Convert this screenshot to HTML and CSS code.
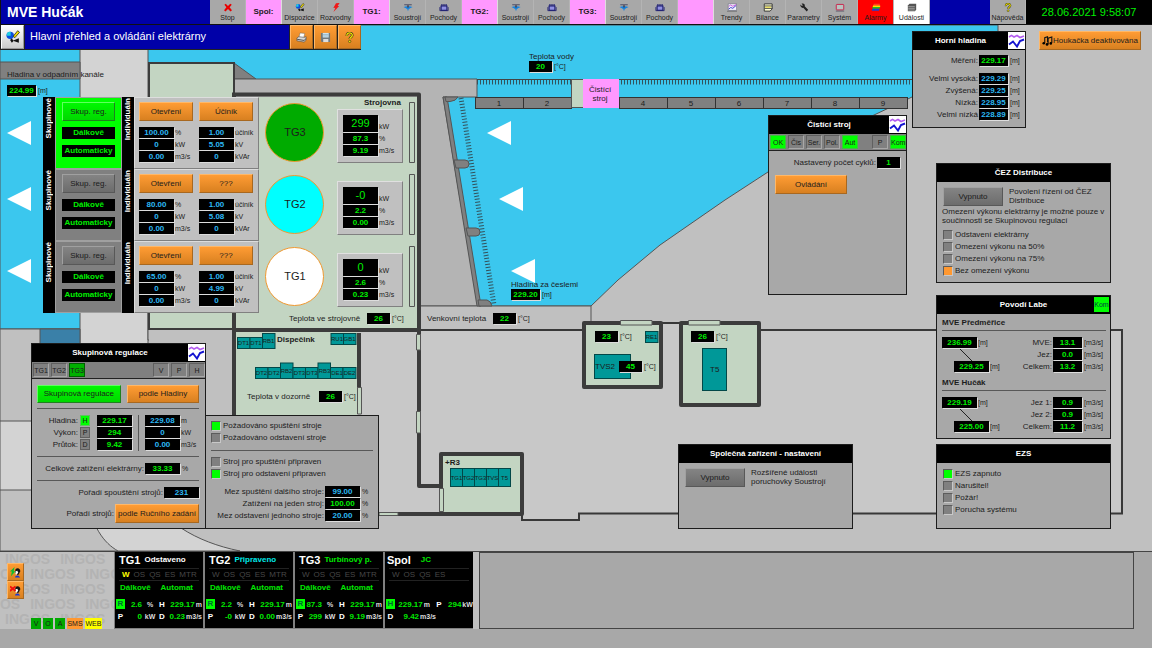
FILE: index.html
```html
<!DOCTYPE html>
<html lang="cs">
<head>
<meta charset="utf-8">
<title>MVE Hučák – Hlavní přehled</title>
<meta name="viewport" content="width=device-width, initial-scale=1">
<link rel="stylesheet" href="styles.css">
</head>
<body>
<svg class="defs" aria-hidden="true">
  <defs>
    <symbol id="i-stop" viewBox="0 0 10 10"><path d="M1 2 2.500 .8 5 3.200 7.500 .8 9.200 2 6.800 4.800 9.400 8 7.800 9.400 5 6.800 2.200 9.400 .6 8 3.200 4.800Z" fill="#e80000"/></symbol>
    <symbol id="i-disp" viewBox="0 0 12 12"><circle cx="3.600" cy="4.600" r="3.200" fill="#0a50e0"/><path d="M.6 4A3 3 0 0 1 4 1.500V5H1Z" fill="#20d0e0"/><path d="M10 .6 11.600 2 7.600 6.600 6.200 5.400Z" fill="#f4e000" stroke="#111" stroke-width=".6"/><path d="M3.500 8.500 5 7l1.200 2L11 7v4L6.500 9.500 5 11Z" fill="#111"/></symbol>
    <symbol id="i-bolt" viewBox="0 0 10 10"><path d="M5 .3 9 0 6.800 3.200 8.500 3.200 2.200 10 4.300 5.400 2 5.600Z" fill="#f01818"/></symbol>
    <symbol id="i-turb" viewBox="0 0 12 10"><path d="M1.500 .8h9v1.600h-9z" fill="#667"/><path d="M.5 4.400 4.200 3.400l1.800.8 1.800-.8 3.700 1L8.500 6 6.800 7 6 9.600 5.200 7 3.500 6Z" fill="#1684e0"/><path d="M5 2.400h2v2.600H5z" fill="#445"/></symbol>
    <symbol id="i-proc" viewBox="0 0 12 10"><path d="M2.500 3.200h7v5h-7z" fill="#9090e0" stroke="#181870" stroke-width="1.300"/><path d="M3.500 .8v2.400M6 .8v2.400M8.500 .8v2.400" stroke="#181870" stroke-width="1.300"/><path d="M1 4.500v4.300h10V4.500" fill="none" stroke="#181870" stroke-width=".9"/></symbol>
    <symbol id="i-trend" viewBox="0 0 12 10"><path d="M1.500 .5h10v8h-10z" fill="#f4f4ff" stroke="#667" stroke-width=".7"/><path d="m2 7 2.500-2L7 6l4-3.500" fill="none" stroke="#2020c0"/><path d="m2 4 2-2 3 1.500L11 1.500" fill="none" stroke="#c040d0"/><path d="M0 9.500h12" stroke="#555" stroke-width=".7"/></symbol>
    <symbol id="i-bal" viewBox="0 0 12 10"><path d="M1.500 .7h9.500v6L8.500 9.300h-7z" fill="#ffffd8" stroke="#222"/><path d="M2 3.200h9M2 6h9" stroke="#222"/><path d="M2.500 4.600h7" stroke="#f0e020"/></symbol>
    <symbol id="i-wrench" viewBox="0 0 10 10"><path d="M1 1.800 2.700 3.400 3.800 2.400 2.300.7C5 0 6.400 1.600 5.800 3.600L9.600 7.600 8 9.400 4.200 5.400C2.200 5.800.6 4 1 1.800Z" fill="#222"/></symbol>
    <symbol id="i-sys" viewBox="0 0 12 10"><rect x="1.500" y="1.300" width="9" height="6.600" rx=".8" fill="#b8c4c0" stroke="#c82850" stroke-width="1.200"/><path d="M1 9.300h10" stroke="#556"/></symbol>
    <symbol id="i-alarm" viewBox="0 0 12 10"><path d="M3.500 .5h7v2h-8z" fill="#ff4020"/><path d="M2.500 2.500h8.500v2H2z" fill="#ffe000"/><path d="M2 4.500h9l-.8 2H1.500z" fill="#20c020"/><path d="M1.500 6.500h8.700L9.500 9H1z" fill="#2040d0"/></symbol>
    <symbol id="i-event" viewBox="0 0 12 10"><path d="M3 .5h8v7.200L9.500 9.500H1V2.500Z" fill="#555"/><path d="M1.500 4h7.800M1.500 6h7.800M1.500 8h7.800" stroke="#ccc" stroke-width=".7"/></symbol>
    <symbol id="i-help" viewBox="0 0 10 12"><path d="M2.200 4.200C1.800 1.800 3.500 1 5 1s3.300.9 3 2.900C7.700 5.600 5.400 5.600 5.300 7.600" fill="none" stroke="#222" stroke-width="2.600"/><path d="M2.200 4.200C1.800 1.800 3.500 1 5 1s3.300.9 3 2.900C7.700 5.600 5.400 5.600 5.300 7.600" fill="none" stroke="#f2e400" stroke-width="1.500"/><circle cx="5.200" cy="10.300" r="1.300" fill="#f2e400" stroke="#222" stroke-width=".6"/></symbol>
    <symbol id="i-print" viewBox="0 0 12 12"><path d="m4.500 1 5 .6-1 4.600-5.300-.4z" fill="#fff" stroke="#666" stroke-width=".5"/><path d="M1 6.500 3 5.200l6.500.6L11 5v3.800L9 11 1 9.600Z" fill="#d8d8d8" stroke="#444" stroke-width=".6"/><path d="m1.300 8 7.500 1.200L11 7.200" fill="none" stroke="#444"/></symbol>
    <symbol id="i-save" viewBox="0 0 12 12"><path d="M1 1h10v10H2.200L1 10Z" fill="#70787c"/><path d="M3 1h6.500v5H3z" fill="#cfe4ee"/><path d="M3.500 7.600h5.600V11H3.500z" fill="#ddd"/><path d="M3.300 2.700h6M3.300 4.300h6" stroke="#78a0b8" stroke-width=".6"/></symbol>
    <symbol id="i-chart" viewBox="0 0 17 17"><path d="M0 0h17v17H0z" fill="#fff"/><path d="m1 5 2.500-1.600L6 5l3-1.500 3 2L16 4" fill="none" stroke="#b45cf0" stroke-width="1.600"/><path d="m1 12.500 4-3 4 5 3-5.500 4-1.500" fill="none" stroke="#1414d0" stroke-width="1.900"/></symbol>
    <symbol id="i-notes" viewBox="0 0 12 12"><path d="M3 8.200V2.300l3-1v6M6.700 9.500V3l4-1.400v6.600" fill="none" stroke="#111" stroke-width="1.200"/><circle cx="1.900" cy="8.400" r="1.400"/><circle cx="5.500" cy="9.800" r="1.500"/><circle cx="9.600" cy="8.600" r="1.400"/></symbol>
    <symbol id="i-head" viewBox="0 0 12 12"><path d="M6 2.500C8 0 11.600 1.400 11.200 5L10 6.800V8L8 8.600 5.500 6Z" fill="#151515"/><path d="M6 4.500 8 4l.8 2L7.600 8.200 6 7.800Z" fill="#fff"/><path d="M5.500 11.500C5.500 8.800 9.500 8 11 11.500Z" fill="#1838d8"/></symbol>
  </defs>
</svg>

<header class="topbar">
  <h1 class="brand">MVE Hučák</h1>
  <nav class="menu" aria-label="Hlavní menu">
    <button class="mi"><svg><use href="#i-stop"/></svg>Stop</button>
    <span class="mg">Spol:</span>
    <button class="mi"><svg><use href="#i-disp"/></svg>Dispozice</button>
    <button class="mi"><svg><use href="#i-bolt"/></svg>Rozvodny</button>
    <span class="mg">TG1:</span>
    <button class="mi"><svg><use href="#i-turb"/></svg>Soustrojí</button>
    <button class="mi"><svg><use href="#i-proc"/></svg>Pochody</button>
    <span class="mg">TG2:</span>
    <button class="mi"><svg><use href="#i-turb"/></svg>Soustrojí</button>
    <button class="mi"><svg><use href="#i-proc"/></svg>Pochody</button>
    <span class="mg">TG3:</span>
    <button class="mi"><svg><use href="#i-turb"/></svg>Soustrojí</button>
    <button class="mi"><svg><use href="#i-proc"/></svg>Pochody</button>
    <span class="mg"></span>
    <button class="mi"><svg><use href="#i-trend"/></svg>Trendy</button>
    <button class="mi"><svg><use href="#i-bal"/></svg>Bilance</button>
    <button class="mi"><svg><use href="#i-wrench"/></svg>Parametry</button>
    <button class="mi"><svg><use href="#i-sys"/></svg>Systém</button>
    <button class="mi mi-alarm"><svg><use href="#i-alarm"/></svg>Alarmy</button>
    <button class="mi mi-event"><svg><use href="#i-event"/></svg>Události</button>
  </nav>
  <div class="topfill"></div>
  <button class="mi"><svg><use href="#i-help"/></svg>Nápověda</button>
  <time class="clock" datetime="2021-06-28T09:58:07">28.06.2021 9:58:07</time>
</header>

<main class="scene">
  <svg class="plan" viewBox="0 25 1152 526" role="img" aria-label="Dispozice elektrárny">
    <g class="edge">
      <path class="water" d="M0 25H998V97H912L874 115 820 142 768 172 725 200 660 245 618 280 591 306H497L80 329H0Z"/>
      <path class="land" d="M0 329H150V551H0Z"/>
      <path class="road" d="M0 421H80V49H148V490C160 520 195 542 240 551H118C104 543 92 528 84 490H0Z"/>
      <path class="deep" d="M40 329H80V360H40Z"/>
      <path class="stone" d="M0 62H80V79H0Z"/>
      <path class="stone" d="M234 63 256 79H234Z"/>
      <path class="deck" d="M234 79H477V97H443L478 306H234Z"/>
      <path class="land" d="M148 306H591V340H148Z"/>
    </g>
    <path class="yard" d="M236 330H1121V513H579V520H522V514H236Z"/>
    <path class="yard" d="M660 323H682V331H660Z"/>
    <path class="land" d="M149 330H233V420H149Z"/>
    <path class="yardline" d="M420 330H582M660 323H680M760 330H1122V513.500H579V520H522V514"/>

    <path class="stone edge" d="M443 97H447L481 306H477Z"/>
    <path class="stone edge" d="M445 97H458Q456 101 450 101.500H446ZM454 160H465A4 4 0 0 1 465 168H456ZM466 228H476A4 4 0 0 1 476 236H468ZM478 300H487Q491 301 492 306H479Z"/>
    <path class="comb-side" d="M461 98 494 305"/>
    <path class="comb-top" d="M477 82H912"/>
    <path class="hair" d="M477 79.500H912M477 97.500H907"/>
    <path class="arrow" d="M7 133 31 121V145ZM7 199 31 187V211ZM7 271 31 259V283ZM487 133 511 121V145ZM499 199 523 187V211ZM511 271 535 259V283Z"/>

    <g class="bay">
      <rect x="475.500" y="97.500" width="48" height="11"/><rect x="523.500" y="97.500" width="48" height="11"/>
      <rect x="619.500" y="97.500" width="48" height="11"/><rect x="667.500" y="97.500" width="48" height="11"/>
      <rect x="715.500" y="97.500" width="48" height="11"/><rect x="763.500" y="97.500" width="48" height="11"/>
      <rect x="811.500" y="97.500" width="48" height="11"/><rect x="859.500" y="97.500" width="48" height="11"/>
    </g>
    <g class="t mid">
      <text x="499" y="106">1</text><text x="547" y="106">2</text><text x="643" y="106">4</text><text x="691" y="106">5</text>
      <text x="739" y="106">6</text><text x="787" y="106">7</text><text x="835" y="106">8</text><text x="883" y="106">9</text>
    </g>
    <rect class="floor edge" x="571.500" y="79.500" width="12" height="28"/>
    <rect class="cleaner" x="583" y="79" width="36" height="29"/>
    <text class="t mid" x="600" y="92">Čistící</text><text class="t mid" x="600" y="101">stroj</text>

    <rect class="floor wall-thin" x="149" y="63" width="85" height="266"/>
    <path class="wall" d="M232 94.500H419V486H439"/>
    <path class="floor" d="M236 97H417V328H236Z"/>
    <path class="wall" d="M234 96V415M236 330H417"/>
    <path class="floor" d="M236 332H357V415H236Z"/>
    <path class="wall" d="M359 333V388"/>
    <path class="wall" d="M398 514H441"/>
    <path class="floor edge" d="M357.500 387.500H361.500V414H357.500ZM416.500 334.500H420.500V350H416.500ZM416.500 411.500H420.500V433H416.500ZM379 512.500H398V515.500H379Z"/>
    <path class="floor edge" d="M409.500 102.500H414.500V162.500H409.500ZM409.500 174.500H414.500V234.500H409.500ZM409.500 246.500H414.500V306.500H409.500Z"/>

    <rect class="room" x="441" y="454" width="81" height="60"/>
    <path class="floor edge" d="M439.500 488.500H443.500V511.500H439.500Z"/>
    <rect class="room" x="584" y="323" width="77" height="64"/>
    <rect class="room" x="681" y="323" width="78" height="82"/>
    <path class="floor edge" d="M620.500 320.500H652V325H620.500ZM688.500 320.500H720V325H688.500Z"/>

    <g class="cab">
      <rect x="237.500" y="337.500" width="12.500" height="11"/><rect x="250" y="337.500" width="12.500" height="11"/><rect x="262.500" y="333.500" width="12.500" height="15"/>
      <rect x="331" y="333.500" width="12.500" height="11"/><rect x="343.500" y="333.500" width="12.500" height="11"/>
      <rect x="255.500" y="367.500" width="12.500" height="11"/><rect x="268" y="367.500" width="12.500" height="11"/><rect x="280.500" y="363" width="12.500" height="15.500"/>
      <rect x="293" y="367.500" width="12.500" height="11"/><rect x="305.500" y="367.500" width="12.500" height="11"/><rect x="318" y="363" width="12.500" height="15.500"/>
      <rect x="330.500" y="367.500" width="12.500" height="11"/><rect x="343" y="367.500" width="13" height="11"/>
      <rect x="450.500" y="468.500" width="12" height="18"/><rect x="462.500" y="468.500" width="12" height="18"/><rect x="474.500" y="468.500" width="12" height="18"/><rect x="486.500" y="468.500" width="12" height="18"/><rect x="498.500" y="468.500" width="12" height="18"/>
      <rect x="645.500" y="331.500" width="12.500" height="11"/><rect x="594.500" y="354.500" width="36" height="24"/><rect x="702.500" y="348.500" width="24" height="42"/>
    </g>
    <g class="t tiny mid">
      <text x="243.500" y="345">DT1</text><text x="256" y="345">DT1</text><text x="268.500" y="343">RB1</text>
      <text x="337" y="341">RU1</text><text x="349.500" y="341">GB1</text>
      <text x="261.500" y="375">DT2</text><text x="274" y="375">DT2</text><text x="286.500" y="373">RB2</text><text x="299.500" y="375">DT3</text>
      <text x="312" y="375">DT3</text><text x="324.500" y="373">RB3</text><text x="337" y="375">DE1</text><text x="349.500" y="375">DE2</text>
      <text x="456.500" y="480">TG1</text><text x="468.500" y="480">TG2</text><text x="480.500" y="480">TG3</text><text x="492.500" y="480">TVS</text><text x="504.500" y="480">T5</text>
      <text x="651.500" y="339">RE1</text>
    </g>
    <g class="t">
      <text x="595" y="369">TVS2</text><text x="710" y="372">T5</text>
      <text x="7" y="77">Hladina v odpadním kanále</text>
      <text x="529" y="59">Teplota vody</text>
      <text x="511" y="287">Hladina za česlemi</text>
      <text x="289" y="321">Teplota ve strojovně</text>
      <text x="427" y="321">Venkovní teplota</text>
      <text x="247" y="399">Teplota v dozorně</text>
      <text class="b" x="364" y="105">Strojovna</text>
      <text class="b" x="277" y="342">Dispečink</text>
      <text class="b" x="445" y="465">+R3</text>
    </g>
    <g class="unitg">
      <circle cx="294.500" cy="132.500" r="29" fill="#00ab00"/><circle cx="294.500" cy="204.500" r="29" fill="#0ff"/><circle cx="294.500" cy="276.500" r="29" fill="#fff"/>
    </g>
    <g class="t big mid"><text x="295" y="136">TG3</text><text x="295" y="208">TG2</text><text x="295" y="280">TG1</text></g>
  </svg>

  <div class="titlebar">
    <button class="tool white" aria-label="Dispozice"><svg><use href="#i-disp"/></svg></button>
    <h2>Hlavní přehled a ovládání elektrárny</h2>
    <button class="tool" aria-label="Tisk"><svg><use href="#i-print"/></svg></button>
    <button class="tool" aria-label="Uložit"><svg><use href="#i-save"/></svg></button>
    <button class="tool" aria-label="Nápověda"><svg><use href="#i-help"/></svg></button>
  </div>

  <div class="pin p-tail"><output class="v">224.99</output><span class="u">[m]</span></div>
  <div class="pin p-water"><output class="v w23">20</output><span class="u">[°C]</span></div>
  <div class="pin p-rack"><output class="v">229.20</output><span class="u">[m]</span></div>
  <div class="pin p-hall"><output class="v w23">26</output><span class="u">[°C]</span></div>
  <div class="pin p-out"><output class="v w23">22</output><span class="u">[°C]</span></div>
  <div class="pin p-ctrl"><output class="v w23">26</output><span class="u">[°C]</span></div>
  <div class="pin p-tvs"><output class="v w23">23</output><span class="u">[°C]</span></div>
  <div class="pin p-tvs2"><output class="v w23">45</output><span class="u">[°C]</span></div>
  <div class="pin p-t5"><output class="v w23">26</output><span class="u">[°C]</span></div>

  <section class="units" aria-label="Řízení soustrojí">
    <div class="unit on">
      <div class="side"><b>Skupinové</b></div>
      <div class="grp"><button class="btn">Skup. reg.</button><output class="v">Dálkově</output><output class="v">Automaticky</output></div>
      <div class="side"><b>Individuáln</b></div>
      <div class="ind">
        <div><button class="btn or">Otevření</button><p><output class="v s">100.00</output>%</p><p><output class="v s">0</output>kW</p><p><output class="v s">0.00</output>m3/s</p></div>
        <div><button class="btn or">Účiník</button><p><output class="v s">1.00</output>účiník</p><p><output class="v s">5.05</output>kV</p><p><output class="v s">0</output>kVAr</p></div>
      </div>
    </div>
    <div class="unit">
      <div class="side"><b>Skupinové</b></div>
      <div class="grp"><button class="btn">Skup. reg.</button><output class="v">Dálkově</output><output class="v">Automaticky</output></div>
      <div class="side"><b>Individuáln</b></div>
      <div class="ind">
        <div><button class="btn or">Otevření</button><p><output class="v s">80.00</output>%</p><p><output class="v s">0</output>kW</p><p><output class="v s">0.00</output>m3/s</p></div>
        <div><button class="btn or">???</button><p><output class="v s">1.00</output>účiník</p><p><output class="v s">5.08</output>kV</p><p><output class="v s">0</output>kVAr</p></div>
      </div>
    </div>
    <div class="unit">
      <div class="side"><b>Skupinové</b></div>
      <div class="grp"><button class="btn">Skup. reg.</button><output class="v">Dálkově</output><output class="v">Automaticky</output></div>
      <div class="side"><b>Individuáln</b></div>
      <div class="ind">
        <div><button class="btn or">Otevření</button><p><output class="v s">65.00</output>%</p><p><output class="v s">0</output>kW</p><p><output class="v s">0.00</output>m3/s</p></div>
        <div><button class="btn or">???</button><p><output class="v s">1.00</output>účiník</p><p><output class="v s">4.99</output>kV</p><p><output class="v s">0</output>kVAr</p></div>
      </div>
    </div>
  </section>

  <div class="meters">
    <div class="meter"><p><output class="v xl">299</output>kW</p><p><output class="v">87.3</output>%</p><p><output class="v">9.19</output>m3/s</p></div>
    <div class="meter"><p><output class="v xl">-0</output>kW</p><p><output class="v">2.2</output>%</p><p><output class="v">0.00</output>m3/s</p></div>
    <div class="meter"><p><output class="v xl">0</output>kW</p><p><output class="v">2.6</output>%</p><p><output class="v">0.23</output>m3/s</p></div>
  </div>

  <section class="panel pl-group">
    <header><h3>Skupinová regulace</h3><button class="chart" aria-label="Trend"><svg><use href="#i-chart"/></svg></button></header>
    <div class="chips"><span>TG1</span><span>TG2</span><span class="g2">TG3</span><i class="grow"></i><span>V</span><span>P</span><span>H</span></div>
    <div class="body">
      <div class="btnrow"><button class="btn lime">Skupinová regulace</button><button class="btn or">podle Hladiny</button></div>
      <hr>
      <div class="pair">
        <div class="left">
          <span>Hladina:</span><i class="mk lit">H</i><output class="v">229.17</output>
          <span>Výkon:</span><i class="mk">P</i><output class="v">294</output>
          <span>Průtok:</span><i class="mk">D</i><output class="v">9.42</output>
        </div>
        <div class="vline"></div>
        <div class="right"><p><output class="v s">229.08</output>m</p><p><output class="v s">0</output>kW</p><p><output class="v s">0.00</output>m3/s</p></div>
      </div>
      <hr>
      <p class="line">Celkové zatížení elektrárny:<output class="v">33.33</output><span class="u u18">%</span></p>
      <hr>
      <p class="line">Pořadí spouštění strojů:<output class="v s">231</output></p>
      <p class="line last">Pořadí strojů:<button class="btn or">podle Ručního zadání</button></p>
    </div>
  </section>

  <section class="panel pl-req">
    <div class="body">
      <label><input type="checkbox" checked>Požadováno spuštění stroje</label>
      <label><input type="checkbox">Požadováno odstavení stroje</label>
      <hr>
      <label><input type="checkbox">Stroj pro spuštění připraven</label>
      <label><input type="checkbox" checked>Stroj pro odstavení připraven</label>
      <div class="limits">
        <p class="line">Mez spuštění dalšího stroje:<output class="v s">99.00</output><span class="u">%</span></p>
        <p class="line">Zatížení na jeden stroj:<output class="v">100.00</output><span class="u">%</span></p>
        <p class="line">Mez odstavení jednoho stroje:<output class="v s">20.00</output><span class="u">%</span></p>
      </div>
    </div>
  </section>

  <section class="panel pl-upper">
    <header><h3>Horní hladina</h3><button class="chart" aria-label="Trend"><svg><use href="#i-chart"/></svg></button></header>
    <div class="body">
      <p class="line first">Měření:<output class="v">229.17</output><span class="u">[m]</span></p>
      <p class="line">Velmi vysoká:<output class="v s">229.29</output><span class="u">[m]</span></p>
      <p class="line">Zvýšená:<output class="v s">229.25</output><span class="u">[m]</span></p>
      <p class="line">Nízká:<output class="v s">228.95</output><span class="u">[m]</span></p>
      <p class="line">Velmi nízká<output class="v s">228.89</output><span class="u">[m]</span></p>
    </div>
  </section>

  <button class="btn or horn"><svg><use href="#i-notes"/></svg>Houkačka deaktivována</button>

  <section class="panel pl-clean">
    <header><h3>Čistící stroj</h3><button class="chart" aria-label="Trend"><svg><use href="#i-chart"/></svg></button></header>
    <div class="chips"><span class="g">OK</span><span>Čis</span><span>Ser.</span><span>Pol.</span><span class="g">Aut</span><i class="grow"></i><span>P</span><span class="g">Kom</span></div>
    <div class="body">
      <p class="line">Nastavený počet cyklů:<output class="v w23">1</output></p>
      <button class="btn or">Ovládání</button>
    </div>
  </section>

  <section class="panel pl-cez">
    <header><h3>ČEZ Distribuce</h3></header>
    <div class="body">
      <div class="sw"><button class="btn">Vypnuto</button><p>Povolení řízení od ČEZ Distribuce</p></div>
      <p class="note">Omezení výkonu elektrárny je možné pouze v součinnosti se Skupinovou regulací</p>
      <label><input type="checkbox">Odstavení elektrárny</label>
      <label><input type="checkbox">Omezení výkonu na 50%</label>
      <label><input type="checkbox">Omezení výkonu na 75%</label>
      <label><input type="checkbox" class="amber" checked>Bez omezení výkonu</label>
    </div>
  </section>

  <section class="panel pl-labe">
    <header><h3>Povodí Labe</h3><span class="kom">Kom</span></header>
    <div class="body">
      <h4>MVE Předměřice</h4>
      <hr>
      <div class="flow">
        <div class="lv"><p><output class="v">236.99</output>[m]</p><svg class="drop"><path d="M0 0 12 12"/></svg><p><output class="v">229.25</output>[m]</p></div>
        <div class="rv"><p class="line">MVE:<output class="v">13.1</output><span class="u">[m3/s]</span></p><p class="line">Jez:<output class="v">0.0</output><span class="u">[m3/s]</span></p><p class="line">Celkem:<output class="v">13.2</output><span class="u">[m3/s]</span></p></div>
      </div>
      <h4>MVE Hučák</h4>
      <hr>
      <div class="flow">
        <div class="lv"><p><output class="v">229.19</output>[m]</p><svg class="drop"><path d="M0 0 12 12"/></svg><p><output class="v">225.00</output>[m]</p></div>
        <div class="rv"><p class="line">Jez 1:<output class="v">0.9</output><span class="u">[m3/s]</span></p><p class="line">Jez 2:<output class="v">0.9</output><span class="u">[m3/s]</span></p><p class="line">Celkem:<output class="v">11.2</output><span class="u">[m3/s]</span></p></div>
      </div>
    </div>
  </section>

  <section class="panel pl-ezs">
    <header><h3>EZS</h3></header>
    <div class="body">
      <label><input type="checkbox" checked>EZS zapnuto</label>
      <label><input type="checkbox">Narušitel!</label>
      <label><input type="checkbox">Požár!</label>
      <label><input type="checkbox">Porucha systému</label>
    </div>
  </section>

  <section class="panel pl-common">
    <header><h3>Společná zařízení - nastavení</h3></header>
    <div class="body">
      <div class="sw"><button class="btn">Vypnuto</button><p>Rozšířené události<br>poruchovky Soustrojí</p></div>
    </div>
  </section>
</main>

<footer class="status">
  <div class="ingos">
    <div class="mark" aria-hidden="true">
      <p><b>INGOS</b><b>INGOS</b></p><p><b>INGOS</b><b>INGOS</b><b>INGOS</b></p><p><b>INGOS</b><b>INGOS</b></p><p><b>INGOS</b><b>INGOS</b><b>INGOS</b></p><p><b>INGOS</b><b>INGOS</b></p>
    </div>
    <div class="users">
      <button class="tool" aria-label="Přihlásit"><svg viewBox="0 0 12 12"><use href="#i-head" width="12" height="12"/><path d="m5 0-5 5h2L1 10l5-5.500H4Z" fill="#10c030"/></svg></button>
      <button class="tool" aria-label="Odhlásit"><svg viewBox="0 0 12 12"><use href="#i-head" width="12" height="12"/><path d="m0 1.500 6 5M6 1.500l-6 5" stroke="#f01010" stroke-width="2"/></svg></button>
    </div>
    <div class="tags"><span>V</span><span>O</span><span>A</span><span class="o">SMS</span><span class="y">WEB</span></div>
  </div>
  <div class="cards">
    <article class="card">
      <h3>TG1<small class="wh">Odstaveno</small></h3>
      <div class="flags"><b class="on">W</b><b>OS</b><b>QS</b><b>ES</b><b>MTR</b></div>
      <div class="modes"><b>Dálkově</b><b>Automat</b></div>
      <div class="nums"><i class="k r">R</i><b>2.6</b><i>%</i><i class="k">H</i><span><b>229.17</b><i>m</i></span></div>
      <div class="nums"><i class="k">P</i><b>0</b><i>kW</i><i class="k">D</i><span><b>0.23</b><i>m3/s</i></span></div>
    </article>
    <article class="card">
      <h3>TG2<small class="cy">Připraveno</small></h3>
      <div class="flags"><b>W</b><b>OS</b><b>QS</b><b>ES</b><b>MTR</b></div>
      <div class="modes"><b>Dálkově</b><b>Automat</b></div>
      <div class="nums"><i class="k r">R</i><b>2.2</b><i>%</i><i class="k">H</i><span><b>229.17</b><i>m</i></span></div>
      <div class="nums"><i class="k">P</i><b>-0</b><i>kW</i><i class="k">D</i><span><b>0.00</b><i>m3/s</i></span></div>
    </article>
    <article class="card">
      <h3>TG3<small>Turbínový p.</small></h3>
      <div class="flags"><b>W</b><b>OS</b><b>QS</b><b>ES</b><b>MTR</b></div>
      <div class="modes"><b>Dálkově</b><b>Automat</b></div>
      <div class="nums"><i class="k r">R</i><b>87.3</b><i>%</i><i class="k">H</i><span><b>229.17</b><i>m</i></span></div>
      <div class="nums"><i class="k">P</i><b>299</b><i>kW</i><i class="k">D</i><span><b>9.19</b><i>m3/s</i></span></div>
    </article>
    <article class="card">
      <h3>Spol<small class="far">JC</small></h3>
      <div class="flags"><b>W</b><b>OS</b><b>QS</b><b>ES</b></div>
      <div class="modes"></div>
      <div class="nums spol"><i class="k r">H</i><span><b>229.17</b><i>m</i></span><i class="k">P</i><span><b>294</b><i>kW</i></span></div>
      <div class="nums spol"><i class="k">D</i><span class="wide"><b>9.42</b><i>m3/s</i></span></div>
    </article>
  </div>
  <div class="log"></div>
</footer>
</body>
</html>
```

FILE: styles.css
```css
* { box-sizing: border-box; }
body {
  margin: 0;
  min-height: 100vh;
  min-width: 1152px;
  background: #a8a8a8;
  color: #1c1c1c;
  font: 8px/12px "Liberation Sans", Arial, sans-serif;
}
h1, h2, h3, h4, p { margin: 0; font-size: 8px; }
i { font-style: normal; }
button { font: inherit; color: inherit; padding: 0; border: 0; margin: 0; }
hr { width: 100%; height: 1px; margin: 0; border: 0; background: #585858; }
.defs { position: absolute; width: 0; height: 0; }

/* top bar */
.topbar { display: flex; height: 25px; background: #0000a8; border-bottom: 1px solid #111; }
.brand { width: 210px; padding-left: 6px; color: #fff; font-size: 14px; line-height: 24px; border-left: 1px solid #111; }
.menu { display: flex; }
.mi {
  width: 36px;
  display: flex;
  flex-direction: column;
  align-items: center;
  justify-content: center;
  gap: 1px;
  padding-top: 2px;
  background: #a8a8a8;
  border-right: 1px solid #b4b4b4;
  font-size: 7px;
  line-height: 10px;
}
.mi svg { width: 10px; height: 9px; }
.mi-alarm { background: #f00; }
.mi-event { background: #fff; }
.mg { width: 36px; background: #ff98ff; font-weight: bold; line-height: 24px; text-align: center; border-right: 1px solid #ddd; }
.topfill { flex: 1; }
.clock { width: 126px; background: #000; color: #00f000; font-size: 11px; line-height: 24px; text-align: center; }

/* plan */
.scene { position: relative; height: 527px; background: #c0c0c0; border-bottom: 1px solid #444; overflow: hidden; }
.plan { position: absolute; left: 0; top: 0; width: 1152px; height: 526px; }
.water { fill: #3bc7ee; }
.land { fill: #c0c0c0; }
.road { fill: #d3d3d3; }
.deep { fill: #3a80a8; }
.stone { fill: #808080; }
.deck { fill: #b4b4b4; }
.yard { fill: #c8c8c8; }
.floor { fill: #c3d5c2; }
.edge { stroke: #555; stroke-width: 1; }
.hair { stroke: #444; fill: none; }
.yardline { fill: none; stroke: #383838; stroke-width: 2; }
.comb-top { fill: none; stroke: #33525c; stroke-width: 5; stroke-dasharray: 1 2; }
.comb-side { fill: none; stroke: #33525c; stroke-width: 5; stroke-dasharray: 1 2; }
.arrow { fill: #fff; }
.bay rect { fill: #808080; stroke: #333; }
.cleaner { fill: #ff98ff; }
.wall { fill: none; stroke: #3c3c3c; stroke-width: 4; stroke-linejoin: round; }
.wall-thin { stroke: #3c3c3c; stroke-width: 2; }
.room { fill: #c3d5c2; stroke: #3c3c3c; stroke-width: 4; stroke-linejoin: round; }
.cab rect { fill: #009898; stroke: #024848; }
.t { font-size: 8px; fill: #1c1c1c; }
.mid { text-anchor: middle; }
.tiny { font-size: 6px; }
.big { font-size: 11px; }
.b { font-weight: bold; }
.unitg circle { stroke: #f09830; stroke-width: 1; }

.titlebar { position: relative; display: flex; width: 361px; height: 25px; background: #222; gap: 1px; padding: 0 0 1px 1px; }
.titlebar h2 { flex: 1; background: #0000a8; color: #fff; padding-left: 5px; font-size: 11px; font-weight: normal; line-height: 23px; }
.tool {
  width: 23px;
  display: grid;
  place-items: center;
  background: linear-gradient(#ff9c34, #d88020);
  border: 1px solid;
  border-color: #ffb868 #a86820 #a86820 #ffb868;
}
.tool svg { width: 11px; height: 11px; }
.tool.white { background: linear-gradient(#fff, #ccc); border-color: #fff #999 #999 #fff; }
.tool.white svg { width: 14px; height: 14px; }

/* readouts */
.v {
  display: block;
  flex: none;
  width: 35px;
  height: 11px;
  background: #000;
  color: #00f000;
  font: bold 8px/11px "Liberation Sans", Arial, sans-serif;
  text-align: center;
  box-shadow: 1px 1px #ddd;
}
.v.s { color: #2cb8f4; }
.w23 { width: 23px; }
.u { font-size: 7px; padding-left: 2px; }
.u18 { width: 19px; }
.pin { position: absolute; display: flex; line-height: 12px; }
.p-tail .v, .p-rack .v { width: 29px; }
.p-tail { left: 7px; top: 60px; }
.p-water { left: 529px; top: 36px; }
.p-rack { left: 511px; top: 264px; }
.p-hall { left: 367px; top: 288px; }
.p-out { left: 493px; top: 288px; }
.p-ctrl { left: 319px; top: 366px; }
.p-tvs { left: 595px; top: 306px; }
.p-tvs2 { left: 619px; top: 336px; }
.p-t5 { left: 691px; top: 306px; }

.btn {
  height: 19px;
  background: linear-gradient(#848484, #6c6c6c);
  border: 1px solid;
  border-color: #a0a0a0 #585858 #585858 #a0a0a0;
  line-height: 16px;
  white-space: nowrap;
}
.btn.or { background: linear-gradient(#ff9c34, #d88020); border-color: #ffb868 #a86820 #a86820 #ffb868; }
.btn.lime { background: linear-gradient(#00f800, #00d800); border-color: #60ff60 #208020 #208020 #60ff60; }

/* generator control rows */
.units { position: absolute; left: 43px; top: 72px; width: 216px; }
.unit { display: flex; height: 72px; }
.side { width: 12px; background: #000; color: #fff; overflow: hidden; display: flex; justify-content: flex-start; align-items: center; writing-mode: vertical-rl; }
.side b { transform: rotate(180deg); line-height: 12px; padding-bottom: 1px; }
.grp { width: 67px; display: flex; flex-direction: column; gap: 6px; padding: 4px 6px; background: #808080; border: 1px solid #a0a0a0; }
.on .grp { background: #00ff00; }
.on .grp .btn { background: linear-gradient(#00f800, #00d800); border-color: #60ff60 #208020 #208020 #60ff60; }
.grp .v { width: 100%; height: 12px; line-height: 12px; box-shadow: none; }
.ind { flex: 1; display: flex; gap: 6px; padding: 4px; background: #c0c0c0; border: 1px solid; border-color: #ddd #808080 #808080 #ddd; }
.ind > div { width: 54px; }
.ind .btn { width: 100%; margin-bottom: 6px; display: block; }
.ind p, .right p, .meter p, .lv p { display: flex; font-size: 7px; line-height: 12px; height: 12px; white-space: nowrap; }
.ind .v, .right .v, .meter .v, .lv .v { margin-right: 1px; }

.meters { position: absolute; left: 337px; top: 84px; display: grid; gap: 18px; }
.meter { width: 66px; height: 54px; padding: 5px; background: #c0c0c0; border: 1px solid; border-color: #e0e0e0 #808080 #808080 #e0e0e0; }
.meter p:first-child { height: 18px; align-items: flex-end; }
.meter .xl { height: 17px; font-size: 11px; line-height: 17px; font-weight: normal; margin-bottom: 1px; }

/* panels */
.panel { position: absolute; background: #a8a8a8; border: 1px solid #1c1c1c; }
.panel header { display: flex; height: 18px; background: #000; color: #fff; }
.panel h3 { flex: 1; text-align: center; line-height: 17px; }
.chart { width: 17px; height: 17px; background: #fff; display: block; }
.chart svg { width: 17px; height: 17px; display: block; }
.chips { display: flex; gap: 2px; height: 17px; padding: 1px 0 1px 1px; background: #808080; border-bottom: 1px solid #222; }
.chips span { width: 16px; line-height: 13px; font-size: 7px; text-align: center; border: 1px solid; border-color: #606060 #a8a8a8 #a8a8a8 #606060; }
.chips .grow { flex: 1; }
.chips .g { background: #0f0; border-color: #40c040; }
.chips .g2 { background: #00b000; border-color: #006000; }
.line { display: flex; justify-content: flex-end; height: 12px; white-space: nowrap; }
.line .v { margin-left: 1px; }
.panel label { display: flex; align-items: center; gap: 2px; height: 12px; white-space: nowrap; }
.panel input {
  appearance: none;
  width: 10px;
  height: 10px;
  margin: 0;
  background: #808080;
  border: 1px solid;
  border-color: #5c5c5c #c8c8c8 #c8c8c8 #5c5c5c;
}
.panel input:checked { background: #0f0; }
.panel input.amber:checked { background: #ff9830; }

.pl-group { left: 31px; top: 318px; width: 175px; }
.pl-group .body { padding: 6px 6px 5px 5px; }
.pl-group hr { margin: 5px 0 6px; }
.btnrow { display: flex; gap: 6px; }
.btnrow .lime { flex: 84; }
.btnrow .or { flex: 72; }
.btnrow .btn { height: 18px; }
.pair { display: flex; gap: 6px; }
.left { display: grid; grid-template-columns: 41px 10px 40px; column-gap: 2px; text-align: right; }
.left .v { justify-self: end; }
.mk { width: 10px; height: 11px; font-size: 7px; line-height: 9px; text-align: center; background: #808080; border: 1px solid #606060; }
.mk.lit { background: #0f0; border-color: #60c060; }
.vline { width: 1px; background: #585858; }
.pl-group .last { height: 19px; line-height: 19px; margin-top: 5px; }
.pl-group .last .btn { width: 84px; margin-left: 1px; }

.pl-req { left: 205px; top: 390px; width: 174px; height: 114px; }
.pl-req .body { padding: 4px 5px 0 5px; }
.pl-req hr { margin: 6px 0 5px; }
.limits { margin-top: 6px; padding-right: 3px; }
.limits .u { width: 10px; }

.pl-upper { left: 912px; top: 6px; width: 114px; height: 97px; }
.pl-upper .body { padding: 5px 3px; }
.pl-upper .v { width: 29px; }
.pl-upper .u { width: 14px; }
.pl-upper .first { margin-bottom: 6px; }
.horn { position: absolute; left: 1039px; top: 6px; display: flex; align-items: center; padding: 0 2px; }
.horn svg { width: 11px; height: 12px; }

.pl-clean { left: 768px; top: 90px; width: 139px; height: 180px; }
.pl-clean .body { padding: 6px; }
.pl-clean .btn { width: 72px; margin-top: 6px; }

.pl-cez, .pl-labe, .pl-ezs { left: 936px; width: 175px; }
.pl-cez { top: 138px; height: 120px; }
.pl-cez .body, .pl-ezs .body, .pl-common .body { padding: 5px 6px; }
.sw { display: flex; gap: 6px; line-height: 9px; }
.sw .btn { flex: none; width: 60px; }
.note { line-height: 9px; margin: 1px -5px 4px -1px; }
.pl-labe { top: 270px; height: 144px; }
.pl-labe header { position: relative; }
.kom { position: absolute; right: 1px; top: 1px; width: 15px; background: #0f0; color: #044; font-size: 7px; line-height: 15px; text-align: center; }
.pl-labe .body { padding: 3px 4px 0 5px; }
.pl-labe hr { margin: 1px 0 6px; }
.pl-labe h4 { height: 12px; line-height: 12px; }
.flow { display: flex; justify-content: space-between; margin-bottom: 4px; height: 36px; }
.lv p { width: 60px; }
.lv p:last-child { padding-left: 12px; }
.drop { display: block; width: 12px; height: 12px; margin-left: 18px; stroke: #222; }
.rv .v { width: 29px; }
.rv .u { width: 24px; }
.pl-ezs, .pl-common { top: 419px; height: 85px; }
.pl-common { left: 678px; width: 175px; }

/* status strip */
.status { display: flex; height: 77px; background: #c0c0c0; }
.ingos { position: relative; width: 114px; overflow: hidden; display: flex; flex-direction: column; justify-content: space-between; padding: 11px 0 0 7px; }
.mark { position: absolute; inset: 0; color: #b3b3b3; font-size: 14px; line-height: 15px; }
.mark p { display: flex; gap: 10px; font-size: 14px; padding-left: 5px; }
.mark p:nth-child(even) { margin-left: -30px; }
.users { position: relative; display: grid; width: 17px; }
.users .tool { width: 17px; height: 18px; }
.tags { position: relative; display: flex; gap: 2px; padding-left: 24px; font-size: 7px; line-height: 11px; text-align: center; }
.tags span { width: 10px; background: #00a800; }
.tags .o { width: 16px; background: #ff9830; }
.tags .y { width: 17px; background: #ff0; }
.cards { display: flex; gap: 2px; background: #808080; padding: 0 0 1px 1px; }
.card { width: 88px; background: #000; color: #00e800; padding: 0 1px; }
.card h3 { display: flex; gap: 4px; padding-left: 3px; font-size: 11px; line-height: 16px; color: #fff; }
.card:last-child h3 { padding-left: 1px; }
.card small { font-size: 8px; color: #00e800; }
.card .wh { color: #fff; }
.card .cy { color: #00e8e8; }
.card .far { padding-left: 6px; }
.flags { display: flex; gap: 4px; margin: 0 3px; padding-left: 3px; height: 13px; line-height: 12px; color: #484848; border: solid #222; border-width: 1px 0; }
.flags b { font-weight: normal; }
.flags b.on { color: #ff0; font-weight: bold; }
.modes { display: flex; justify-content: space-between; height: 18px; padding: 0 9px 0 4px; line-height: 13px; }
.nums { display: grid; grid-template-columns: 9px 17px 16px 8px 1fr; height: 12px; line-height: 12px; white-space: nowrap; }
.nums > b { text-align: right; }
.nums i { color: #ddd; font-size: 7px; font-weight: bold; text-align: center; }
.nums .k { font-size: 8px; color: #fff; }
.nums .r { background: #0f0; color: #063; height: 10px; line-height: 10px; }
.nums span { display: flex; justify-content: flex-end; gap: 1px; }
.spol { grid-template-columns: 9px 35px 18px 1fr; }
.spol .wide { grid-column: span 2; padding-right: 2px; justify-self: start; width: 43px; }
.log { flex: 1; margin: 0 18px 0 6px; background: #a8a8a8; border: 1px solid #444; box-shadow: 18px 0 #a8a8a8; }
```
